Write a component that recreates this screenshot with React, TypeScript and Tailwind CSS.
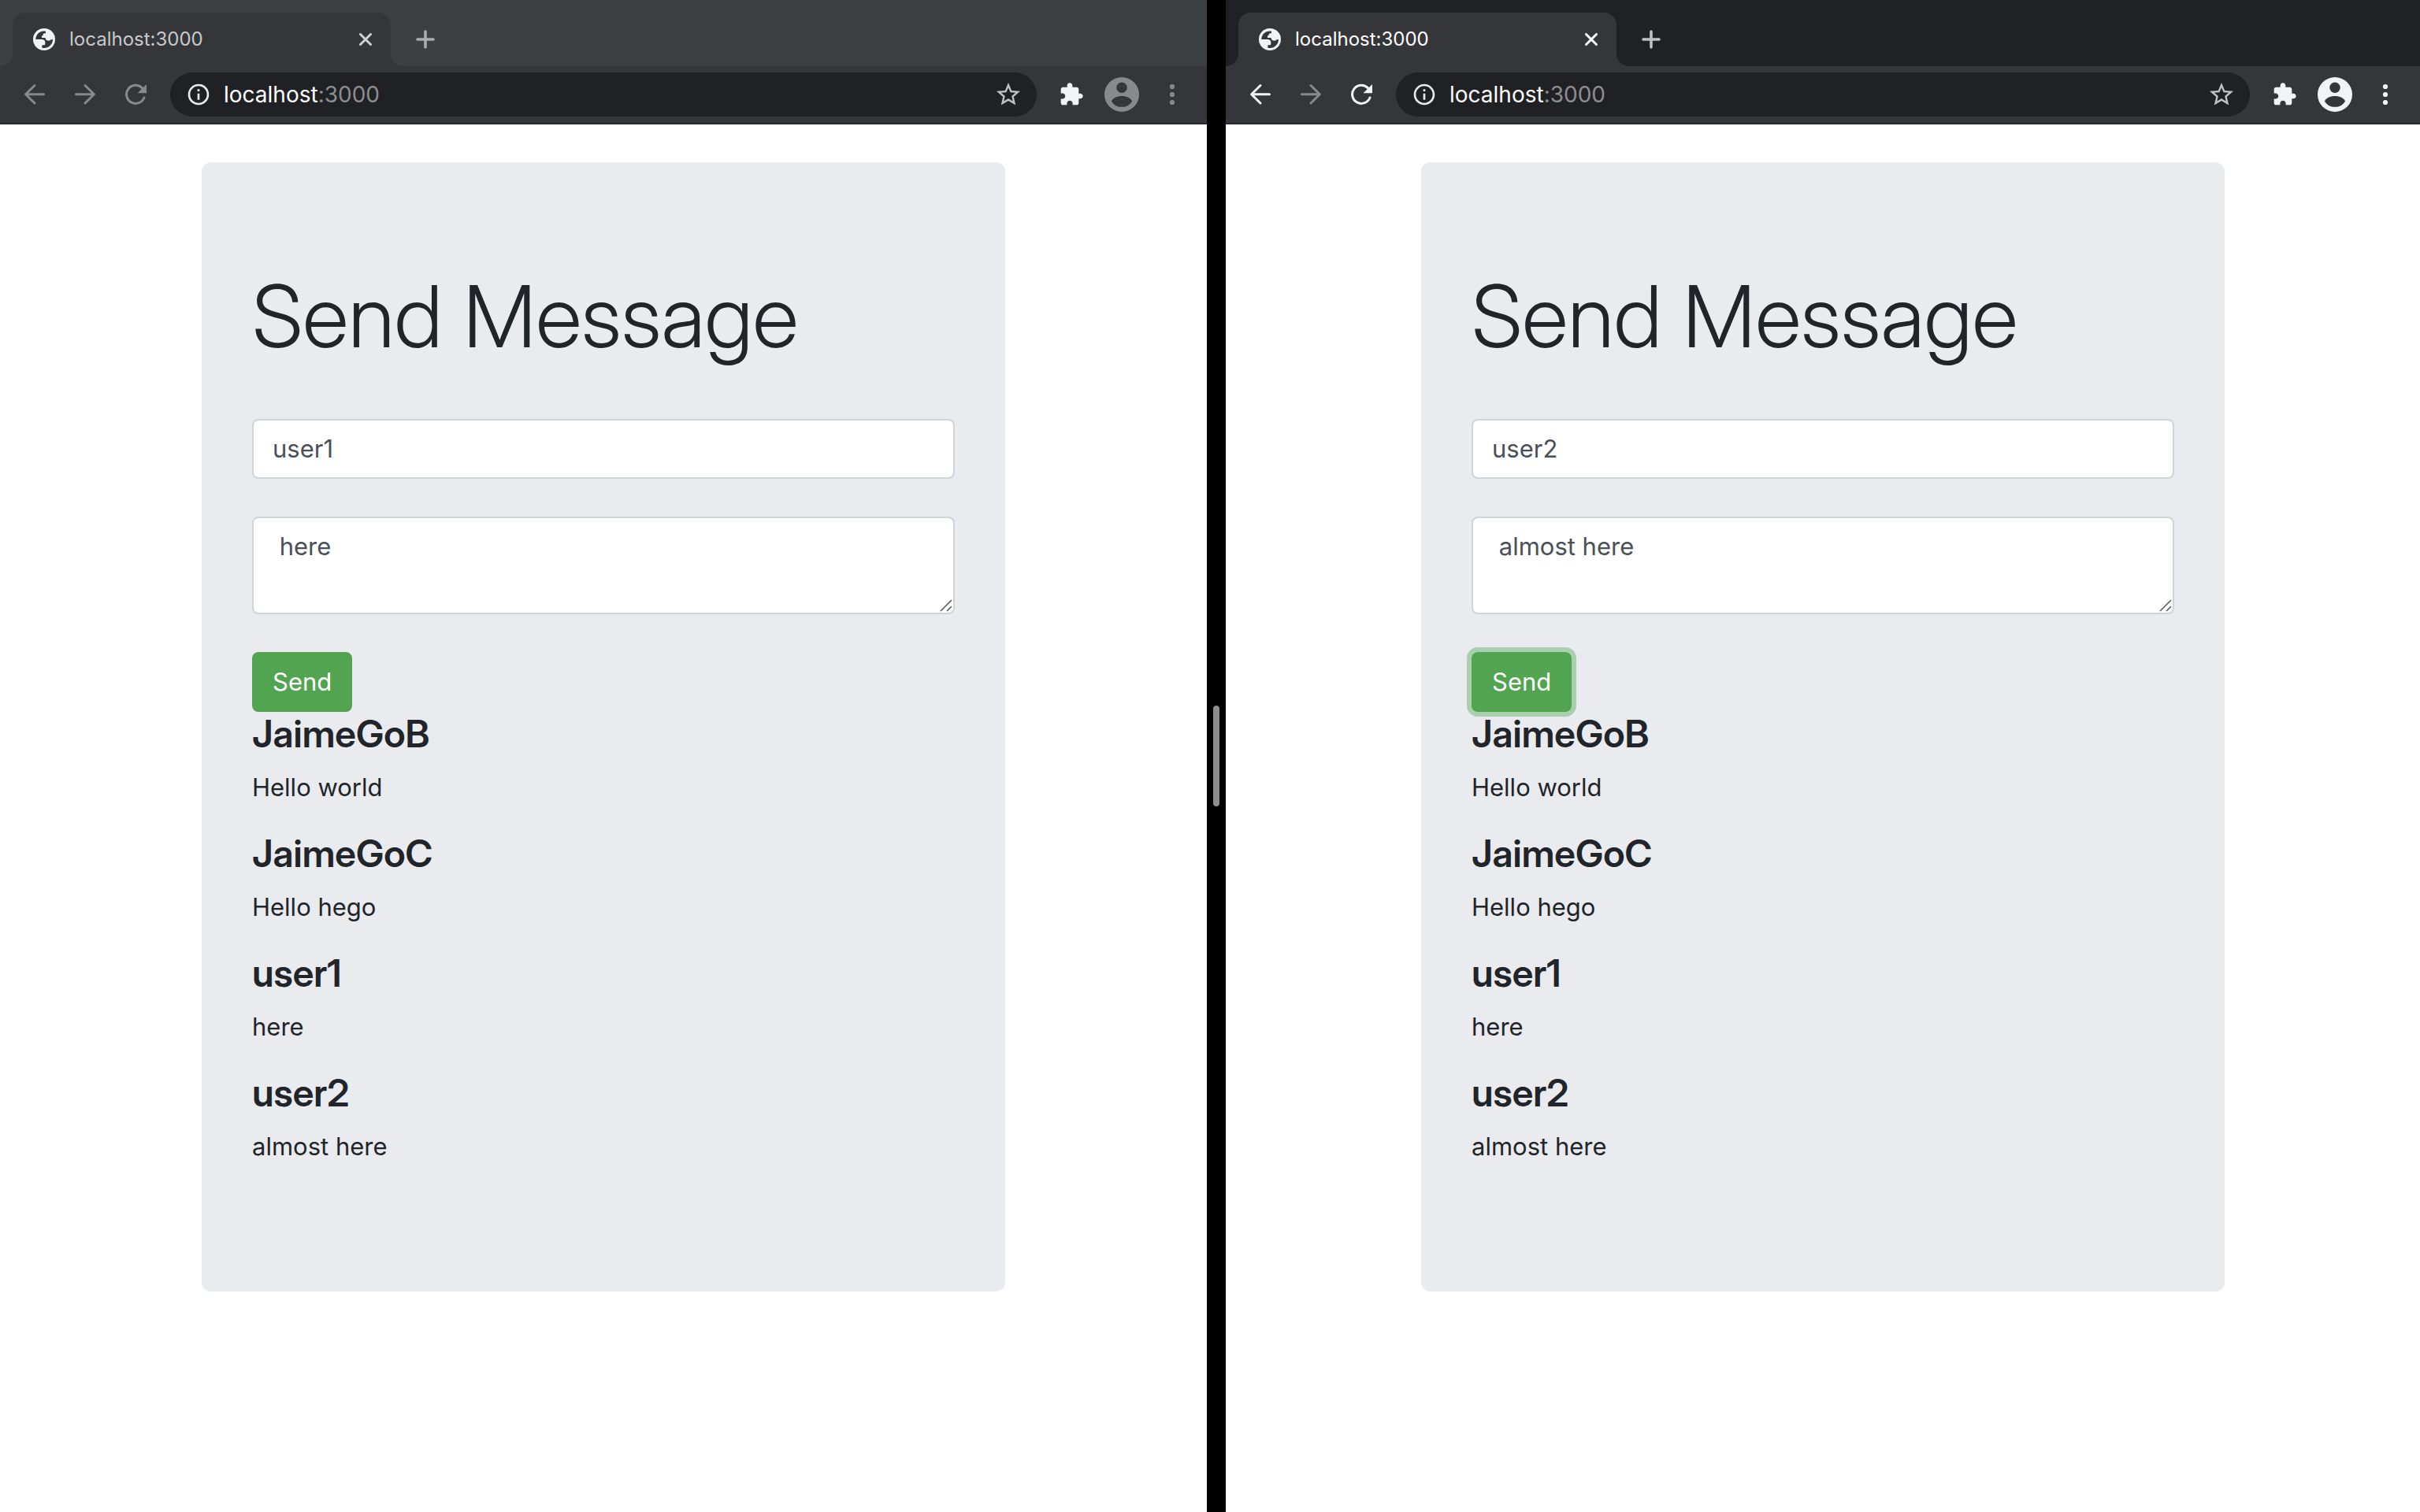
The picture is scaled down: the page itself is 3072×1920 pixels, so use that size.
import { useState } from "react";

type WindowProps = { id: string; active: boolean; user: string; draft: string };

const messages = [
  { name: "JaimeGoB", text: "Hello world" },
  { name: "JaimeGoC", text: "Hello hego" },
  { name: "user1", text: "here" },
  { name: "user2", text: "almost here" },
];

function GlobeIcon() {
  return (
    <svg viewBox="0 0 84 84" className="size-7 shrink-0" aria-hidden="true">
      <circle cx="42" cy="42" r="42" fill="#f1f3f4" />
      <path
        d="M10 42C10 24 24 10 43 10.5L48 11V19H44C39 19 38 21 38 26L33 29V36H44C48 36 48 39 49 43C51 46 55 47 60 47C65 47 66 42 75 42C75 61 60 75 42 75C38 75 36 74 34 74V64H41C45 64 46 62 46 57V53C46 46 41 42 33 42Z"
        fill="#35363a"
      />
    </svg>
  );
}

function ArrowIcon({ flip = false }: { flip?: boolean }) {
  return (
    <svg viewBox="0 0 28 28" className={flip ? "size-7 -scale-x-100" : "size-7"} aria-hidden="true">
      <path
        d="M14 2.5 2.6 13.8 14 25M3 13.8H25.5"
        fill="none"
        stroke="currentColor"
        strokeWidth="3"
        strokeLinecap="round"
        strokeLinejoin="round"
      />
    </svg>
  );
}

function ReloadIcon() {
  return (
    <svg viewBox="0 0 28 28" className="size-7" aria-hidden="true">
      <path
        d="M25 18A11.6 11.6 0 1 1 22.4 5.6"
        fill="none"
        stroke="currentColor"
        strokeWidth="3"
        strokeLinecap="round"
      />
      <path d="M28 1V12.2H16.6Z" fill="currentColor" />
    </svg>
  );
}

function BrowserChrome({ active }: { active: boolean }) {
  const strip = active ? "bg-[#202124]" : "bg-[#3c4043]";
  const icon = active ? "text-[#f1f3f4]" : "text-[#88898b]";
  return (
    <header className="bg-[#35363a]">
      <div className={"flex items-end pt-4 " + strip}>
        <div className="h-17 w-4 bg-[#35363a]">
          <div className={"size-full rounded-br-[16px] " + strip} />
        </div>
        <div className="flex h-17 w-[480px] items-center rounded-t-[16px] bg-[#35363a] pl-[26px] pr-6">
          <GlobeIcon />
          <span className={"ml-[18px] flex-1 text-[24px] leading-8 " + (active ? "text-white" : "text-[#c8c9ca]")}>
            localhost:3000
          </span>
          <button type="button" aria-label="Close tab" className={active ? "text-white" : "text-[#d0d1d2]"}>
            <svg viewBox="0 0 16 16" className="size-4" aria-hidden="true">
              <path d="M1.5 1.5l13 13M14.5 1.5l-13 13" stroke="currentColor" strokeWidth="3" strokeLinecap="round" />
            </svg>
          </button>
        </div>
        <div className="h-17 w-4 bg-[#35363a]">
          <div className={"size-full rounded-bl-[16px] " + strip} />
        </div>
        <button
          type="button"
          aria-label="New tab"
          className={"ml-4 flex h-17 items-center " + (active ? "text-[#bdc1c6]" : "text-[#a9acb0]")}
        >
          <svg viewBox="0 0 24 24" className="size-6" aria-hidden="true">
            <path d="M12 2v20M2 12h20" stroke="currentColor" strokeWidth="3.6" strokeLinecap="round" />
          </svg>
        </button>
      </div>

      <div className="flex h-[74px] items-center border-b-2 border-[#28292c] pl-[30px] pr-8">
        <nav className="flex gap-9" aria-label="History">
          <button type="button" aria-label="Back" className={icon}>
            <ArrowIcon />
          </button>
          <button type="button" aria-label="Forward" className="text-[#88898b]">
            <ArrowIcon flip />
          </button>
          <button type="button" aria-label="Reload" className={icon}>
            <ReloadIcon />
          </button>
        </nav>

        <div className="ml-[30px] flex h-14 flex-1 items-center rounded-full bg-[#202124] pl-5 pr-[18px]">
          <svg viewBox="0 0 24 24" className="size-8 text-[#e8eaed]" aria-hidden="true">
            <path
              fill="currentColor"
              d="M11 7h2v2h-2zm0 4h2v6h-2zm1-9C6.48 2 2 6.48 2 12s4.48 10 10 10 10-4.48 10-10S17.52 2 12 2zm0 18c-4.41 0-8-3.59-8-8s3.59-8 8-8 8 3.59 8 8-3.59 8-8 8z"
            />
          </svg>
          <a href="#localhost" className="ml-4 flex-1 text-[28px] leading-9 text-white">
            localhost<span className="text-[#8d8e90]">:3000</span>
          </a>
          <button type="button" aria-label="Bookmark this tab" className="text-[#c0c1c1]">
            <svg viewBox="0 0 24 24" className="size-9" aria-hidden="true">
              <path
                fill="currentColor"
                d="M22 9.24l-7.19-.62L12 2 9.19 8.63 2 9.24l5.46 4.73L5.82 21 12 17.27 18.18 21l-1.63-7.03L22 9.24zM12 15.4l-3.76 2.27 1-4.28-3.32-2.88 4.38-.38L12 6.1l1.71 4.04 4.38.38-3.32 2.88 1 4.28L12 15.4z"
              />
            </svg>
          </button>
        </div>

        <button type="button" aria-label="Extensions" className="ml-7 text-[#f1f3f4]">
          <svg viewBox="0 0 24 24" className="size-8" aria-hidden="true">
            <path
              fill="currentColor"
              d="M20.5 11H19V7c0-1.1-.9-2-2-2h-4V3.5C13 2.12 11.88 1 10.5 1S8 2.12 8 3.5V5H4c-1.1 0-1.99.9-1.99 2v3.8H3.5c1.49 0 2.7 1.21 2.7 2.7s-1.21 2.7-2.7 2.7H2V20c0 1.1.9 2 2 2h3.8v-1.5c0-1.49 1.21-2.7 2.7-2.7 1.49 0 2.7 1.21 2.7 2.7V22H17c1.1 0 2-.9 2-2v-4h1.5c1.38 0 2.5-1.12 2.5-2.5S21.88 11 20.5 11z"
            />
          </svg>
        </button>
        <button type="button" aria-label="Profile" className={"ml-[26px] " + icon}>
          <svg viewBox="0 0 44 44" className="size-11" aria-hidden="true">
            <circle cx="22" cy="22" r="22" fill="currentColor" />
            <circle cx="22" cy="13.3" r="6.7" fill="#35363a" />
            <path
              d="M9 30.4C10.5 26.6 16 24 22 24S33.5 26.6 35 30.4C32.8 34.9 27.8 37.8 22 37.8S11.2 34.9 9 30.4Z"
              fill="#35363a"
            />
          </svg>
        </button>
        <button type="button" aria-label="Menu" className={"ml-[30px] " + icon}>
          <svg viewBox="0 0 24 32" className="h-8 w-6" fill="currentColor" aria-hidden="true">
            <circle cx="12" cy="6" r="3.1" />
            <circle cx="12" cy="16" r="3.1" />
            <circle cx="12" cy="26" r="3.1" />
          </svg>
        </button>
      </div>
    </header>
  );
}

function BrowserWindow({ id, active, user, draft }: WindowProps) {
  const [name, setName] = useState(user);
  const [message, setMessage] = useState(draft);
  const field =
    "block w-full rounded-[8px] border-2 border-[#ced4d8] bg-white px-6 py-3 text-[31px] leading-[48px] text-[#495057] outline-none";
  return (
    <section className="flex min-w-0 flex-col bg-white">
      <BrowserChrome active={active} />
      <main className="flex justify-center px-8 pt-12">
        <div className="w-full max-w-[1020px] rounded-[12px] bg-[#eaebef] px-16 py-32 text-[#212529]">
          <h1 className="font-['Inter_Display',Inter,sans-serif] text-[109px] leading-[134px] font-light">
            Send Message
          </h1>
          <form className="mt-16" onSubmit={(e) => e.preventDefault()}>
            <input
              id={id + "-name"}
              aria-label="Name"
              type="text"
              className={field}
              value={name}
              onChange={(e) => setName(e.target.value)}
            />
            <div className="relative mt-12">
              <textarea
                id={id + "-message"}
                aria-label="Message"
                rows={2}
                className={field + " resize-none"}
                value={message}
                onChange={(e) => setMessage(e.target.value)}
              />
              <svg
                viewBox="0 0 16 16"
                className="pointer-events-none absolute right-[3px] bottom-[3px] size-4"
                aria-hidden="true"
              >
                <path d="M1 15 15 1M9 15l6-6" stroke="#5c5c5c" strokeWidth="1.6" />
              </svg>
            </div>
            <button
              type="submit"
              className={
                "mt-12 block rounded-[8px] border-2 border-[#53a451] bg-[#53a451] px-6 py-3 text-[31px] leading-[48px] text-white " +
                (active ? "shadow-[0_0_0_6px_#a8d0ae]" : "")
              }
            >
              Send
            </button>
          </form>
          {messages.map((m) => (
            <article key={m.name} className="pb-8">
              <h4 className="font-['Inter_Display',Inter,sans-serif] text-[48px] leading-[56px] font-semibold">
                {m.name}
              </h4>
              <p className="mt-4 text-[31px] leading-[48px]">{m.text}</p>
            </article>
          ))}
        </div>
      </main>
    </section>
  );
}

export default function App() {
  return (
    <div className="grid min-h-screen grid-cols-[383fr_24px_379fr] bg-black font-[Inter,sans-serif]">
      <BrowserWindow id="left" active={false} user="user1" draft=" here" />
      <div className="flex items-center justify-center">
        <div className="h-32 w-2 rounded-full bg-[#8c8c8c]" role="separator" aria-orientation="vertical" />
      </div>
      <BrowserWindow id="right" active user="user2" draft=" almost here" />
    </div>
  );
}
